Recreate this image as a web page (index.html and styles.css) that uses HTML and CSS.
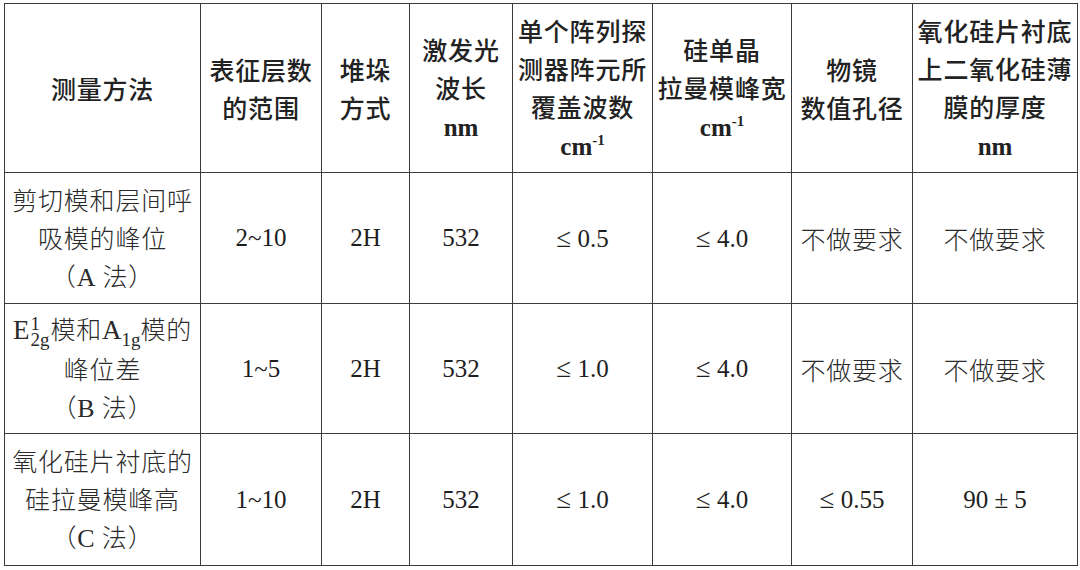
FILE: index.html
```html
<!DOCTYPE html>
<html lang="zh-CN">
<head>
<meta charset="utf-8">
<link rel="stylesheet" href="styles.css">
</head>
<body>
<table class="spec">
  <colgroup>
    <col class="c1"><col class="c2"><col class="c3"><col class="c4"><col class="c5"><col class="c6"><col class="c7"><col class="c8">
  </colgroup>
  <thead>
    <tr class="head">
      <th>测量方法</th>
      <th>表征层数<br>的范围</th>
      <th>堆垛<br>方式</th>
      <th>激发光<br>波长<br><b class="unit">nm</b></th>
      <th>单个阵列探<br>测器阵元所<br>覆盖波数<br><b class="unit">cm<sup>-1</sup></b></th>
      <th>硅单晶<br>拉曼模峰宽<br><b class="unit">cm<sup>-1</sup></b></th>
      <th>物镜<br>数值孔径</th>
      <th>氧化硅片衬底<br>上二氧化硅薄<br>膜的厚度<br><b class="unit">nm</b></th>
    </tr>
  </thead>
  <tbody>
    <tr class="r1">
      <td class="cn">剪切模和层间呼<br>吸模的峰位<br>（<span class="lat">A</span> 法）</td>
      <td>2~10</td>
      <td>2H</td>
      <td>532</td>
      <td><span class="le">≤</span> 0.5</td>
      <td><span class="le">≤</span> 4.0</td>
      <td class="cn">不做要求</td>
      <td class="cn">不做要求</td>
    </tr>
    <tr class="r2">
      <td class="cn"><span class="math">E<span class="ss"><span class="sp">1</span><span class="sb">2g</span></span></span>模和<span class="math">A<span class="sub1">1g</span></span>模的<br>峰位差<br>（<span class="lat">B</span> 法）</td>
      <td>1~5</td>
      <td>2H</td>
      <td>532</td>
      <td><span class="le">≤</span> 1.0</td>
      <td><span class="le">≤</span> 4.0</td>
      <td class="cn">不做要求</td>
      <td class="cn">不做要求</td>
    </tr>
    <tr class="r3">
      <td class="cn">氧化硅片衬底的<br>硅拉曼模峰高<br>（<span class="lat">C</span> 法）</td>
      <td>1~10</td>
      <td>2H</td>
      <td>532</td>
      <td><span class="le">≤</span> 1.0</td>
      <td><span class="le">≤</span> 4.0</td>
      <td><span class="le">≤</span> 0.55</td>
      <td>90 ± 5</td>
    </tr>
  </tbody>
</table>
</body>
</html>
```

FILE: styles.css
```css
html, body {
  margin: 0;
  padding: 0;
  background: #ffffff;
}

body {
  padding: 3px 0 0 4px;
}

.spec {
  border-collapse: collapse;
  table-layout: fixed;
  width: 1073px;
  font-family: "Liberation Serif", "Noto Sans CJK SC", serif;
  font-size: 25px;
  color: #1e1e1e;
}

.c1 { width: 196px; }
.c2 { width: 121px; }
.c3 { width: 88px; }
.c4 { width: 103px; }
.c5 { width: 140px; }
.c6 { width: 139px; }
.c7 { width: 121px; }
.c8 { width: 165px; }

.spec th,
.spec td {
  border: 1.5px solid #3a3a3a;
  text-align: center;
  vertical-align: middle;
  padding: 0;
  line-height: 38px;
  white-space: nowrap;
}

.spec th {
  font-family: "Noto Sans CJK SC", sans-serif;
  font-weight: 500;
  font-size: 25px;
  letter-spacing: 0.8px;
  color: #222;
}

.head { height: 169px; }
.r1 { height: 131px; }
.r2 { height: 130px; }
.r3 { height: 132px; }

.unit {
  font-family: "Liberation Serif", serif;
  font-weight: bold;
  font-size: 25px;
  letter-spacing: 0;
}

.unit sup {
  font-size: 15px;
  line-height: 0;
  vertical-align: 10px;
}

.cn {
  font-family: "Noto Sans CJK SC", sans-serif;
  font-weight: 300;
  font-size: 25px;
  letter-spacing: 0.8px;
  color: #2a2a2a;
}

.le {
  font-size: 27px;
}

.lat {
  font-family: "Liberation Serif", serif;
  font-size: 26px;
}

.math {
  font-family: "Liberation Serif", serif;
  font-size: 27px;
  letter-spacing: 0;
}

.ss {
  display: inline-block;
  vertical-align: -7px;
  line-height: 16px;
  font-size: 19px;
  text-align: left;
  margin-left: 1px;
  margin-right: 1px;
}

.sp,
.sb {
  display: block;
}

.sub1 {
  font-size: 19px;
  vertical-align: -7px;
  line-height: 0;
}
```
